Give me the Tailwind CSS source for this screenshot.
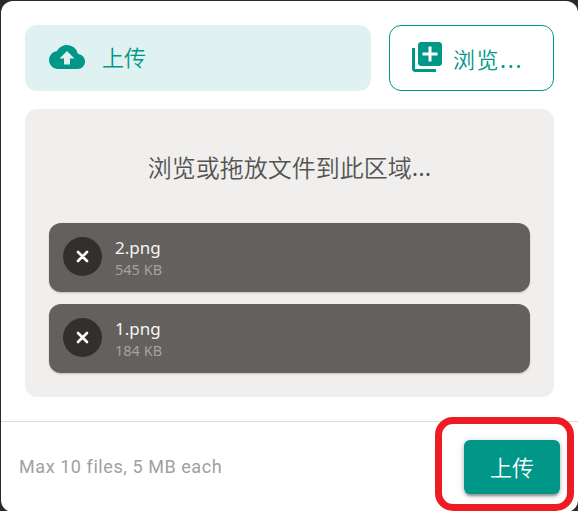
<!DOCTYPE html>
<html lang="zh-CN">
<head>
<meta charset="utf-8">
<title>上传</title>
<script src="https://cdn.jsdelivr.net/npm/@tailwindcss/browser@4"></script>
</head>
<body class="h-[511px] w-[578px] overflow-hidden bg-[#2b2929] pt-px pl-px font-['Noto_Sans','Noto_Sans_CJK_SC',sans-serif]">
<main class="relative flex h-[511px] w-[577px] flex-col rounded-xl bg-white">
  <section class="flex h-[420px] flex-col gap-[18px] px-6 pt-6">
    <div class="flex h-[66px] w-[529px] gap-[18px]">
      <div class="flex w-[346px] items-center rounded-xl bg-[#e0f1f1] pl-6 text-[#009688]">
        <svg class="mt-[-2px] size-9 shrink-0" viewBox="0 0 24 24" fill="currentColor"><path d="M19.35 10.04A7.49 7.49 0 0 0 12 4C9.11 4 6.6 5.64 5.35 8.04A5.994 5.994 0 0 0 0 14c0 3.31 2.69 6 6 6h13c2.76 0 5-2.24 5-5 0-2.64-2.05-4.78-4.65-4.96zM14 13v4h-4v-4H7l5-5 5 5h-3z"/></svg>
        <span class="mb-1 ml-[17px] font-['Noto_Sans_CJK_SC',sans-serif] text-[22px] leading-8 font-[350]">上传</span>
      </div>
      <button class="flex w-[165px] items-center rounded-xl border border-[#009688] pl-[19px] text-[#009688]">
        <svg class="mt-[-2px] size-9 shrink-0" viewBox="0 0 24 24" fill="currentColor"><path d="M4 6H2v14c0 1.1.9 2 2 2h14v-2H4V6zm16-4H8c-1.1 0-2 .9-2 2v12c0 1.100.9 2 2 2h12c1.1 0 2-.9 2-2V4c0-1.1-.9-2-2-2zm-1 9h-4v4h-2v-4H9V9h4V5h2v4h4v2z"/></svg>
        <span class="mt-px ml-2 text-[22px] leading-8 tracking-[1.5px]"><span class="font-['Noto_Sans_CJK_SC',sans-serif] font-[350]">浏览</span><span class="tracking-[1.9px]">...</span></span>
      </button>
    </div>
    <div class="h-[288px] w-[529px] rounded-xl bg-[#f0efee] px-6">
      <p class="flex h-[114px] items-center justify-center pt-0.5 text-2xl text-[#555452]"><span class="font-['Noto_Sans_CJK_SC',sans-serif] font-[350]">浏览或拖放文件到此区域</span><span>...</span></p>
      <div class="flex flex-col gap-3">
        <div class="flex h-[69px] items-center rounded-xl bg-[#64605d] pl-3.5 shadow-[0_1px_2px_rgba(0,0,0,0.2)]">
          <button class="mb-[3px] flex size-[39px] items-center justify-center rounded-full bg-[#32302f]"><svg class="size-[13px]" viewBox="0 0 13 13" fill="none" stroke="white" stroke-width="2.600" stroke-linecap="round"><path d="M2 2l9 9M11 2L2 11"/></svg></button>
          <div class="ml-[13px]"><div class="text-[17px] leading-[22px] text-[#f5f5f5]">2.png</div><div class="text-[14.500px] leading-5 text-[#a5a2a0]">545 KB</div></div>
        </div>
        <div class="flex h-[69px] items-center rounded-xl bg-[#64605d] pl-3.5 shadow-[0_1px_2px_rgba(0,0,0,0.2)]">
          <button class="mb-[3px] flex size-[39px] items-center justify-center rounded-full bg-[#32302f]"><svg class="size-[13px]" viewBox="0 0 13 13" fill="none" stroke="white" stroke-width="2.600" stroke-linecap="round"><path d="M2 2l9 9M11 2L2 11"/></svg></button>
          <div class="ml-[13px]"><div class="text-[17px] leading-[22px] text-[#f5f5f5]">1.png</div><div class="text-[14.500px] leading-5 text-[#a5a2a0]">184 KB</div></div>
        </div>
      </div>
    </div>
  </section>
  <footer class="flex grow items-center justify-between border-t border-[#dcdcdc] pr-[18px] pl-[18px]">
    <span class="font-[Roboto,sans-serif] text-lg tracking-[0.57px] text-[#a0a0a0]">Max 10 files, 5 MB each</span>
    <button class="h-[54px] w-24 rounded-md bg-[#009688] text-[22px] font-[350] text-white shadow-[0_3px_2px_-1px_rgba(0,0,0,0.25),0_2px_4px_rgba(0,0,0,0.2),0_1px_8px_rgba(0,0,0,0.12)]">上传</button>
  </footer>
  <div class="pointer-events-none absolute top-[415.500px] left-[434px] h-[94px] w-[139px] rounded-[18px] border-[7px] border-[#ed1c24]"></div>
</main>
</body>
</html>
